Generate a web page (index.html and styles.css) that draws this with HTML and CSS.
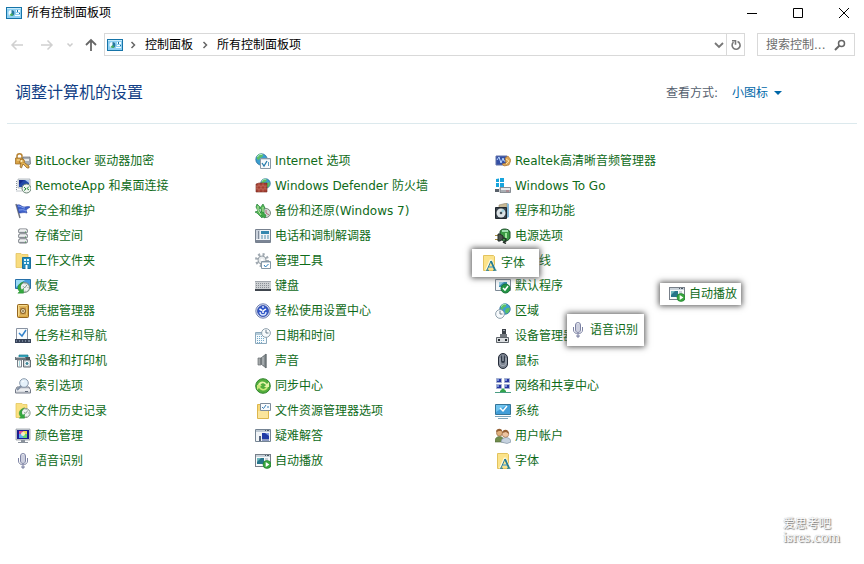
FILE: index.html
```html
<!DOCTYPE html>
<html lang="zh-CN">
<head>
<meta charset="utf-8">
<title>所有控制面板项</title>
<link rel="stylesheet" href="styles.css">
</head>
<body>
<svg class="sprite" aria-hidden="true">
  <symbol id="i-panel" viewBox="0 0 16 16"><rect x=".5" y="2.5" width="15" height="11" fill="#8fd0f3" stroke="#1674a8"/><path d="M1 3h14v1H1z" fill="#c8ecfb"/><circle cx="5.500" cy="8" r="3" fill="#f2fbff"/><path d="M5.500 8V5a3 3 0 0 1 0 6z" fill="#2577a0"/><path d="M5.500 8l-2 2a3 3 0 0 0 4 0z" fill="#48ad63"/><path d="M10 5h4v2h-4zM10 8h4v1h-4zM9 10h5v1H9z" fill="#f5fdff"/><path d="M11 5h1v2h-1zM13 8h1v1h-1z" fill="#20709d"/></symbol>
  <symbol id="i-chev" viewBox="0 0 8 8"><path d="M2.500 1l3 3-3 3" fill="none" stroke="#666" stroke-width="1.500"/></symbol>
  <symbol id="i-font" viewBox="0 0 16 16"><path d="M2.500.5h10l1 1v14h-11z" fill="#fbe38b" stroke="#e3c35e"/><path d="M5 15.500l4.500-10h1l4 10M7 12h6" fill="none" stroke="#fff8dc" stroke-width="2"/><path d="M6 15L10 6l4 9M7.500 12h5" fill="none" stroke="#267c91"/><path d="M10 6l4 9" stroke="#267c91" stroke-width="1.800"/><path d="M5 15.300h3M12 15.300h3.500" stroke="#267c91"/></symbol>
  <symbol id="i-mic" viewBox="0 0 16 16"><rect x="5.500" y=".5" width="5" height="10" rx="2.500" fill="#f4f5fa" stroke="#7c82a3"/><path d="M6 3h4M6 5h4M6 7h4M6 9h4" stroke="#a4a8c2"/><path d="M3.500 5v3c0 5 9 5 9 0V5M8 12v3M7 13v2h2v-2" fill="none" stroke="#7c82a3"/></symbol>
  <symbol id="i-play" viewBox="0 0 16 16"><rect x=".5" y="1.500" width="15" height="12" fill="#f8fafb" stroke="#777f89"/><path d="M1 2h14v2H1z" fill="#c9d2da"/><path d="M10 2.500h1M12 2.500h2" stroke="#4b5965"/><path d="M2 5h7v6H2z" fill="#27758a"/><path d="M2 5h4L2 9z" fill="#6cb7be"/><path d="M10 6h3M10 8h3" stroke="#9aa9b4"/><circle cx="12" cy="11.500" r="4" fill="#3aa63f" stroke="#18802a" stroke-width=".6"/><path d="M10.700 9v5l3.700-2.500z" fill="#fff"/></symbol>
  <symbol id="i-globe" viewBox="0 0 16 16"><circle cx="8" cy="8" r="7" fill="#3c9fd0" stroke="#286c9b"/><path d="M3 3c3-3 6-2 7-1L9 5 6 6 5 9 2 7zM10 7l4-1c1 5-2 8-5 8l-1-4z" fill="#5cc063"/><path d="M3 5c1-3 4-4 6-3" fill="none" stroke="#c9f2f5"/></symbol>
  <symbol id="i-clock" viewBox="0 0 16 16"><circle cx="8" cy="8" r="7" fill="#f7fafc" stroke="#899ba7" stroke-width="1.500"/><path d="M8 3v5h4" fill="none" stroke="#5f7482" stroke-width="1.500"/></symbol>
  <symbol id="i-restore" viewBox="0 0 16 16"><circle cx="9.500" cy="8" r="6" fill="#eef2f0" stroke="#7e9187" stroke-width="1.300"/><path d="M9.500 8.500l3-4M9.500 8.500l-2-2M10 3v1M14 8h-1M10 12v1" stroke="#697c71" fill="none"/><path d="M8 1C1 3-1 9 3 13l-2 2h7V9l-2 2C3 8 4 4 8 1z" fill="#35a83f" stroke="#168626" stroke-width=".5"/></symbol>
</svg>

<header>
  <div class="titlebar">
    <h1 class="caption"><svg class="icon" aria-hidden="true"><use href="#i-panel"/></svg>所有控制面板项</h1>
    <div class="window-buttons">
      <button type="button" aria-label="最小化"><svg viewBox="0 0 12 12"><path d="M1 6.500h10" stroke="#000"/></svg></button>
      <button type="button" aria-label="最大化"><svg viewBox="0 0 12 12"><path d="M1.500 1.500h9v9h-9z" fill="none" stroke="#000"/></svg></button>
      <button type="button" aria-label="关闭"><svg viewBox="0 0 12 12"><path d="M1 1l10 10M11 1L1 11" stroke="#000"/></svg></button>
    </div>
  </div>
  <div class="toolbar">
    <nav class="history">
      <button type="button" aria-label="后退" disabled><svg class="arrow" viewBox="0 0 14 14"><path d="M13 7H2M6.500 2.500L2 7l4.500 4.500" fill="none" stroke="#d0d0d0" stroke-width="1.500"/></svg></button>
      <button type="button" aria-label="前进" disabled><svg class="arrow" viewBox="0 0 14 14"><path d="M1 7h11M7.500 2.500L12 7l-4.500 4.500" fill="none" stroke="#d0d0d0" stroke-width="1.500"/></svg></button>
      <button type="button" class="recent" aria-label="最近位置"><svg class="chev" viewBox="0 0 8 8"><path d="M1.500 2.500L4 5l2.500-2.500" fill="none" stroke="#ccc" stroke-width="1.500"/></svg></button>
      <button type="button" class="up" aria-label="上移"><svg class="arrow" viewBox="0 0 14 14"><path d="M7 13V2M2 7l5-5 5 5" fill="none" stroke="#666" stroke-width="1.800"/></svg></button>
    </nav>
    <div class="address">
      <svg class="icon" aria-hidden="true"><use href="#i-panel"/></svg>
      <svg class="chev" aria-hidden="true"><use href="#i-chev"/></svg>
      <a href="#">控制面板</a>
      <svg class="chev" aria-hidden="true"><use href="#i-chev"/></svg>
      <a href="#">所有控制面板项</a>
      <button type="button" class="drop" aria-label="历史记录"><svg viewBox="0 0 10 10"><path d="M1 3l4 4 4-4" fill="none" stroke="#777" stroke-width="1.800"/></svg></button>
      <button type="button" class="refresh" aria-label="刷新"><svg viewBox="0 0 12 12"><path d="M7.500 2.500A4 4 0 1 1 3.500 3.200" fill="none" stroke="#777" stroke-width="1.600"/><path d="M2 1.800h3.500v4" fill="none" stroke="#777" stroke-width="1.600"/></svg></button>
    </div>
    <div class="search">
      <input type="text" aria-label="搜索控制面板" placeholder="搜索控制...">
      <svg viewBox="0 0 12 12" aria-hidden="true"><circle cx="7.500" cy="4.500" r="3" fill="none" stroke="#666" stroke-width="1.500"/><path d="M5.500 6.500L1 11" stroke="#666" stroke-width="2"/></svg>
    </div>
  </div>
</header>

<main>
  <div class="heading">
    <h2>调整计算机的设置</h2>
    <div class="view">
      <label for="view">查看方式:</label>
      <select id="view"><option>小图标</option></select>
      <svg viewBox="0 0 8 4" aria-hidden="true"><path d="M0 0h8L4 4z" fill="#0067a8"/></svg>
    </div>
  </div>

  <ul class="items">
    <li><a href="#"><svg class="icon" viewBox="0 0 16 16"><path d="M2 6V3c0-3 5-3 5 0v3" fill="none" stroke="#b78231" stroke-width="1.500"/><path d="M.5 5h7v6h-7z" fill="#d8a346" stroke="#96661f" stroke-width=".7"/><path d="M8 4h7l.5 7-4 2-4-3z" fill="#a9afb5" stroke="#676c72" stroke-width=".7"/><path d="M9 6h5v2H9z" fill="#e7eaec"/><circle cx="7" cy="8.500" r="2.500" fill="#d9a94d" stroke="#a87529"/><path d="M6 10l-1 4 1.500 1L8 11l4 4h2v-2l-4-3" fill="#e2b253" stroke="#8b5d20" stroke-width=".7"/><circle cx="6.500" cy="8" r="1" fill="#fff2c6"/><path d="M2 7h3" stroke="#fae1a1"/></svg>BitLocker 驱动器加密</a></li>
    <li><a href="#"><svg class="icon" viewBox="0 0 16 16"><path d="M1.500 3v10h6" fill="none" stroke="#85919b" stroke-dasharray="1"/><path d="M3 1h12v9H3z" fill="#e9edf0" stroke="#9ba5ad" stroke-width=".7"/><path d="M4 2h10v7H4z" fill="#2148a7"/><path d="M4 2h5L4 7z" fill="#142b8b"/><path d="M10 2h4v3z" fill="#a8c7f1"/><circle cx="11.500" cy="10.500" r="4.500" fill="#f0f5f0" stroke="#678173"/><path d="M9 9l2 2-2 1.500M14 8.500l-2 2 2 1.500" fill="none" stroke="#278a39"/></svg>RemoteApp 和桌面连接</a></li>
    <li><a href="#"><svg class="icon" viewBox="0 0 16 16"><path d="M1 1l4 14" stroke="#71757f" stroke-width="1.500"/><path d="M2 2c4-1 4 2 7 2 2 0 4-1 6 0l-4 3 1 3c-3-1-5 0-8 0z" fill="#3e61ca" stroke="#2942a1" stroke-width=".6"/><path d="M3 3c3 0 4 2 7 2M4 7c3 0 4-1 7 1" stroke="#84a2ee" fill="none"/></svg>安全和维护</a></li>
    <li><a href="#"><svg class="icon" viewBox="0 0 16 16"><g fill="#dcdfe1" stroke="#747980"><rect x="3.500" y="1" width="9" height="4" rx="1.500"/><rect x="3.500" y="6" width="9" height="4" rx="1.500"/><rect x="3.500" y="11" width="9" height="4" rx="1.500"/></g><path d="M5 2h6M5 7h6M5 12h6" stroke="#fff"/><path d="M5 4.500h6M5 9.500h6M5 14.500h6" stroke="#868b92"/><path d="M10 4h1M10 9h1M10 14h1" stroke="#429a4b"/></svg>存储空间</a></li>
    <li><a href="#"><svg class="icon" viewBox="0 0 16 16"><path d="M1 .5h5l1 1h6v13H1z" fill="#f8dc7f" stroke="#dfbd58" stroke-width=".7"/><path d="M7.500 4.500h8v11h-8z" fill="#238bbb" stroke="#1a709e"/><path d="M9 6h2v2H9zM12 6h2v2h-2zM9 9h2v2H9zM12 9h2v2h-2z" fill="#d9f5ff"/><path d="M10.500 12h2v4h-2z" fill="#fff"/></svg>工作文件夹</a></li>
    <li><a href="#"><svg class="icon" viewBox="0 0 16 16"><path d="M.5 1.500h15v9H.5z" fill="#459ddd" stroke="#2770a9"/><path d="M1 2h9L1 9z" fill="#9bdbf5"/><use href="#i-restore" x="2" y="3" width="13" height="13"/></svg>恢复</a></li>
    <li><a href="#"><svg class="icon" viewBox="0 0 16 16"><rect x="2.500" y="1.500" width="11" height="13" rx="1" fill="#dba945" stroke="#93651f"/><path d="M3.500 13V2.500H12" fill="none" stroke="#f7db8d"/><path d="M4.500 4h7v8h-7z" fill="#c8933b" stroke="#efd187" stroke-width=".7"/><circle cx="8" cy="8" r="2.500" fill="#efe1b5" stroke="#805923"/><circle cx="8" cy="8" r="1" fill="#8b7552"/></svg>凭据管理器</a></li>
    <li><a href="#"><svg class="icon" viewBox="0 0 16 16"><path d="M1.500.5h11v12h-11z" fill="#f9fbfd" stroke="#8993a2"/><path d="M4 5l3 3 4-6" fill="none" stroke="#3181cb" stroke-width="1.500"/><path d="M0 11h16v4H0z" fill="#374359"/><path d="M1 13h1M4 13h1M7 13h1M10 13h1M13 13h2" stroke="#a9bacf"/></svg>任务栏和导航</a></li>
    <li><a href="#"><svg class="icon" viewBox="0 0 16 16"><path d="M4 2h9v3H4z" fill="#35a7bd" stroke="#17758b" stroke-width=".7"/><path d="M0 4h11v3H0z" fill="#6d757c"/><path d="M1 4.500h9" stroke="#b5bdc3"/><path d="M2.500 7h4v7h-4z" fill="#f8fafa" stroke="#788189"/><path d="M4 8h1v5H4z" fill="#a9d8dd"/><path d="M8.500 7h7v7h-7z" fill="#cbd1d5" stroke="#656d73"/><circle cx="12" cy="10.500" r="2" fill="#3e8798" stroke="#fff"/><path d="M11 4h4v3h-4z" fill="#4c565c"/></svg>设备和打印机</a></li>
    <li><a href="#"><svg class="icon" viewBox="0 0 16 16"><path d="M2 9h12l1.500 3v3H.5v-3z" fill="#d8dbe0" stroke="#747b89"/><path d="M1 12h14" stroke="#fff"/><path d="M10 13.500h3" stroke="#5c6676"/><circle cx="9" cy="5" r="4.300" fill="#e5f1fa" stroke="#8898ab"/><path d="M6 8l-4 4" stroke="#8290a5" stroke-width="2"/><path d="M7 4l2-1" stroke="#fff"/></svg>索引选项</a></li>
    <li><a href="#"><svg class="icon" viewBox="0 0 16 16"><path d="M1 .5h6l1 1h4v13H1z" fill="#fae081" stroke="#dfc151" stroke-width=".7"/><use href="#i-restore" x="3" y="4" width="13" height="12"/></svg>文件历史记录</a></li>
    <li><a href="#"><svg class="icon" viewBox="0 0 16 16"><path d="M1 1h14v11H1z" fill="#d5d9df" stroke="#878f9a" stroke-width=".7"/><path d="M2 2h12v9H2z" fill="#1a1d91"/><path d="M4 3h4v3H4z" fill="#d84e99"/><path d="M8 3h4v3H8z" fill="#eed649"/><path d="M4 6h4v4H4z" fill="#5ba9f2"/><path d="M8 6h4v4H8z" fill="#65d56b"/><circle cx="8" cy="6" r="2" fill="#f5efc9"/><path d="M6 12h4v2h3v1H3v-1h3z" fill="#8a929c"/></svg>颜色管理</a></li>
    <li><a href="#"><svg class="icon"><use href="#i-mic"/></svg>语音识别</a></li>

    <li><a href="#"><svg class="icon" viewBox="0 0 16 16"><use href="#i-globe" width="13" height="13"/><path d="M5.500 5.500h10v10h-10z" fill="#f8fafc" stroke="#8b98a5"/><path d="M6 6h9v1H6z" fill="#d4dde5"/><path d="M7 10l2 3 3-5M13 10h1M13 12h1" fill="none" stroke="#267cac" stroke-width="1.300"/></svg>Internet 选项</a></li>
    <li><a href="#"><svg class="icon" viewBox="0 0 16 16"><use href="#i-globe" x="5" width="11" height="11"/><path d="M1 6l3-1h8v9H1z" fill="#a53f32" stroke="#77291f" stroke-width=".6"/><path d="M1 8h11M1 11h11M4 5v3M8 5v3M2 8v3M6 8v3M10 8v3M4 11v3M8 11v3" stroke="#db9a83" stroke-width=".4"/></svg>Windows Defender 防火墙</a></li>
    <li><a href="#"><svg class="icon" viewBox="0 0 16 16"><circle cx="11" cy="10" r="4.500" fill="#d5dad7" stroke="#788a7c"/><path d="M11 7v3l3 2" fill="none" stroke="#b36372"/><path d="M2 1l3 3-1 3 2 3V6L5 5l3-4 2 4H9v6l-2 4-5-5-2-1 3-1-2-4z" fill="#58b957" stroke="#238039" stroke-width=".7"/><path d="M7 8c1 2 2 3 4 4l-1 3c-3-1-5-3-5-5z" fill="#41a946" stroke="#238039" stroke-width=".6"/><path d="M3 3v4l3 5M8 4v5" fill="none" stroke="#bce9a9"/></svg>备份和还原(Windows 7)</a></li>
    <li><a href="#"><svg class="icon" viewBox="0 0 16 16"><path d="M.5 1.500h15v13H.5z" fill="#f1f3f6" stroke="#77818f"/><path d="M1 2h4v9H1z" fill="#cbd2dc"/><path d="M3.500 3v8" stroke="#7f8a99"/><path d="M6 3h8v3H6z" fill="#3587ae"/><path d="M6 8h2M9 8h2M12 8h2M6 10h2M9 10h2M12 10h2" stroke="#528fac"/><path d="M1 13h14" stroke="#536175" stroke-width="1.500"/></svg>电话和调制解调器</a></li>
    <li><a href="#"><svg class="icon" viewBox="0 0 16 16"><circle cx="7" cy="7" r="5.500" fill="none" stroke="#a1aab2" stroke-width="3" stroke-dasharray="2 2.300"/><circle cx="7" cy="7" r="4" fill="#e8ebed" stroke="#9aa3aa"/><circle cx="7" cy="7" r="1.500" fill="#fff"/><path d="M6.500 8.500h9v7h-9z" fill="#fff" stroke="#8597a6"/><path d="M7 9.500h8" stroke="#c9d3dc"/><path d="M9 12l1.500 2 3-3" fill="none" stroke="#257bbb"/></svg>管理工具</a></li>
    <li><a href="#"><svg class="icon" viewBox="0 0 16 16"><path d="M0 3h16v9H0z" fill="#cdd0d3"/><path d="M0 11h16v2H0z" fill="#40464e"/><path d="M1 5.500h14M1 7.500h14M1 9.500h14" stroke="#8b9096" stroke-dasharray="1 1"/><path d="M0 3.500h16" stroke="#8e949b" stroke-width=".7"/></svg>键盘</a></li>
    <li><a href="#"><svg class="icon" viewBox="0 0 16 16"><circle cx="8" cy="8" r="7.200" fill="#d9e4fa" stroke="#7381b0"/><circle cx="8" cy="8" r="5.500" fill="#3359c8" stroke="#243b98" stroke-width=".7"/><path d="M8 10V8l3-2M4.500 6L7 7.500" fill="none" stroke="#fff" stroke-width="1.500"/><path d="M5 9c0 4 6 4 6 0M7 4h2" fill="none" stroke="#dce8ff" stroke-width="1.300"/></svg>轻松使用设置中心</a></li>
    <li><a href="#"><svg class="icon" viewBox="0 0 16 16"><path d="M.5 4.500h11v11H.5z" fill="#f5fafd" stroke="#8ca9bc"/><path d="M1 5h10v2H1z" fill="#b4cbd9"/><path d="M2 8.500h8M2 10.500h8M2 12.500h8M2 14.500h6" stroke="#75a9c8" stroke-dasharray="1 1"/><use href="#i-clock" x="6" width="10" height="10"/></svg>日期和时间</a></li>
    <li><a href="#"><svg class="icon" viewBox="0 0 16 16"><path d="M3 5h3v7H3z" fill="#a4a8aa" stroke="#676d70" stroke-width=".7"/><path d="M6 5l5-4v14l-5-4z" fill="#858c90" stroke="#585f63" stroke-width=".7"/><path d="M8 4v8" stroke="#c3c7c9"/><path d="M11 1v14" stroke="#676e72"/></svg>声音</a></li>
    <li><a href="#"><svg class="icon" viewBox="0 0 16 16"><circle cx="8" cy="8" r="7.300" fill="#54ae3d" stroke="#31852d"/><path d="M3 7c1-4 6-5 9-1l2-2v5H9l2-2C8 4 6 5 5 8z" fill="#e4f3a6"/><path d="M13 9c-1 4-6 5-9 1l-2 2V7h5L5 9c3 3 5 2 6 0z" fill="#c9e879"/></svg>同步中心</a></li>
    <li><a href="#"><svg class="icon" viewBox="0 0 16 16"><path d="M2.500 1.500h4l1 1h6v13h-11z" fill="#f7d878" stroke="#dcb64d"/><path d="M5.500.5h10v7h-10z" fill="#f9fbfd" stroke="#7f8c9b"/><path d="M7 4l1.500 1.500L11 2M12 4h2" fill="none" stroke="#387eb6"/><path d="M3 8h10v7H3z" fill="#fbe59c"/></svg>文件资源管理器选项</a></li>
    <li><a href="#"><svg class="icon" viewBox="0 0 16 16"><path d="M.5 1.500h15v12H.5z" fill="#f1f4f7" stroke="#758493"/><path d="M1 2h14v2H1z" fill="#bec9d3"/><path d="M10 2.500h1M12 2.500h2" stroke="#53606d"/><path d="M7 5h7v6H7z" fill="#203ba6"/><path d="M10 5h4v3z" fill="#849ee5"/><path d="M7 11h7v2H7z" fill="#8d9bc2"/><path d="M4 8h2v5H4z" fill="#56657d"/></svg>疑难解答</a></li>
    <li><a href="#"><svg class="icon"><use href="#i-play"/></svg>自动播放</a></li>

    <li><a href="#"><svg class="icon" viewBox="0 0 16 16"><path d="M1 3h11v9H1z" fill="#3450a5" stroke="#6071a7"/><path d="M2 7l2-3 2 6 2-5 1 3h3" fill="none" stroke="#b6d5ff"/><path d="M10 5l3-2 3 4-2 5-5 1-2-2 4-1z" fill="#dda755" stroke="#a66d2c" stroke-width=".6"/><path d="M11 6l3 2-3 3" fill="none" stroke="#ffe3a1"/></svg>Realtek高清晰音频管理器</a></li>
    <li><a href="#"><svg class="icon" viewBox="0 0 16 16"><path d="M1 1l3-.5v3.500H1zM5 0l4-.5V4H5zM1 5h3v4H1zM5 5h4v4H5z" fill="#17a4dc"/><path d="M5 9.500h10.500v5H5z" fill="#a9aeb4" stroke="#676e76" stroke-width=".7"/><path d="M6 10h9v2H6z" fill="#e6e9eb"/><path d="M0 11h4v3H0z" fill="#59616a"/><path d="M11 13h3" stroke="#ae6972"/></svg>Windows To Go</a></li>
    <li><a href="#"><svg class="icon" viewBox="0 0 16 16"><path d="M4 2l8-2v13l-8 2z" fill="#c9b995" stroke="#8e836d" stroke-width=".6"/><path d="M12 0l2 1v13l-2 1z" fill="#84b7d9"/><path d="M.5 4.500h11v11H.5z" fill="#39424a" stroke="#20272e"/><circle cx="6" cy="10" r="4.500" fill="#dde3e6"/><path d="M6 10l1-4 3 2z" fill="#a2d2df"/><circle cx="6" cy="10" r="1.300" fill="#42525a"/></svg>程序和功能</a></li>
    <li><a href="#"><svg class="icon" viewBox="0 0 16 16"><path d="M5 4c0-4 9-4 10 0v6c-2 4-8 4-10 0z" fill="#3d9b46" stroke="#1c4f2a"/><path d="M7 2h6v2H7z" fill="#a0ddb0"/><path d="M11 5v5" stroke="#9ee89d" stroke-width="2"/><path d="M0 7.500h4M0 11.500h4" stroke="#a78d3e"/><path d="M3 6h2l3 2v3l-3 2H3z" fill="#4a524d" stroke="#252c27"/><path d="M8 10c4 0 4 4 0 4l3 1.500" fill="none" stroke="#26342a" stroke-width="1.500"/></svg>电源选项</a></li>
    <li><a href="#"><svg class="icon" viewBox="0 0 16 16"><path d="M3 5h6v7H3z" fill="#a82939"/><path d="M10 5c2 2 2 5 0 7M12 3c4 3 4 8 0 11" fill="none" stroke="#cf6574"/></svg>红外线</a></li>
    <li><a href="#"><svg class="icon" viewBox="0 0 16 16"><path d="M.5 1.500h15v11H.5z" fill="#f4f7fa" stroke="#7c8995"/><path d="M4 4h8v5H4z" fill="#398bb1"/><path d="M4 4h5L4 8z" fill="#93cadf"/><circle cx="10.500" cy="10.500" r="4.500" fill="#249544" stroke="#167236"/><path d="M8 10l2 2 3-4" fill="none" stroke="#fff" stroke-width="1.500"/></svg>默认程序</a></li>
    <li><a href="#"><svg class="icon" viewBox="0 0 16 16"><use href="#i-globe" x="4" width="12" height="12"/><use href="#i-clock" x="0" y="6" width="10" height="10"/></svg>区域</a></li>
    <li><a href="#"><svg class="icon" viewBox="0 0 16 16"><path d="M7 1h4v6H7z" fill="#3b4148"/><path d="M8 2h2v1H8z" fill="#a0a8af"/><path d="M5 6h7v4H5z" fill="#73787e"/><path d="M1.500 9.500h12v5h-12z" fill="#d9dcdf" stroke="#5e646a"/><path d="M3 11h2v2H3zM10 11h2v2h-2z" fill="#252a2f"/></svg>设备管理器</a></li>
    <li><a href="#"><svg class="icon" viewBox="0 0 16 16"><rect x="3.500" y=".5" width="9" height="15" rx="4.500" fill="#7d8491" stroke="#242b38"/><rect x="6" y="2" width="4" height="8" rx="2" fill="#303947"/><path d="M8 2v6" stroke="#c3ccd8"/><path d="M5 5v6c1 2 5 2 6 0V5" fill="none" stroke="#a8afba"/></svg>鼠标</a></li>
    <li><a href="#"><svg class="icon" viewBox="0 0 16 16"><g fill="#2735a0" stroke="#a3afcf"><path d="M1.500.5h5v4h-5zM9.500.5h5v4h-5zM1.500 6.500h5v4h-5zM9.500 6.500h5v4h-5z"/></g><path d="M2 1h2v2H2zM10 1h2v2h-2zM2 7h2v2H2zM10 7h2v2h-2z" fill="#7891d8"/><path d="M8 10l3 3v2H5v-2z" fill="#32a44c"/><path d="M0 14.500h16" stroke="#4b9d84"/></svg>网络和共享中心</a></li>
    <li><a href="#"><svg class="icon" viewBox="0 0 16 16"><path d="M.5 1.500h15v10H.5z" fill="#429ed9" stroke="#357598"/><path d="M1 2h11L1 9z" fill="#70c4ef"/><path d="M5 5l3 3 4-5" fill="none" stroke="#fff" stroke-width="1.500"/><path d="M0 13.500h16M3 15.500h10" stroke="#7ba5bc"/></svg>系统</a></li>
    <li><a href="#"><svg class="icon" viewBox="0 0 16 16"><path d="M0 13c0-6 9-6 9 0v1H0z" fill="#708c4c" stroke="#4d6935" stroke-width=".6"/><path d="M6 14c0-6 10-6 10 0l-4 1.500z" fill="#c6d2df" stroke="#74869a" stroke-width=".6"/><circle cx="4.500" cy="5" r="3" fill="#e0b07c" stroke="#8b623c" stroke-width=".6"/><circle cx="10.500" cy="6" r="3.300" fill="#edc4a0" stroke="#986c4a" stroke-width=".6"/><path d="M1 4c0-4 6-4 6-1L4 3zM7 5c1-5 7-4 7 1l-3-2z" fill="#956034"/></svg>用户帐户</a></li>
    <li><a href="#"><svg class="icon"><use href="#i-font"/></svg>字体</a></li>
  </ul>
</main>

<a href="#" class="float float-font"><svg class="icon"><use href="#i-font"/></svg>字体</a>
<a href="#" class="float float-speech"><svg class="icon"><use href="#i-mic"/></svg>语音识别</a>
<a href="#" class="float float-play"><svg class="icon"><use href="#i-play"/></svg>自动播放</a>

<div class="watermark"><span>爱思考吧</span><span class="site">isres.com</span></div>
</body>
</html>
```
FILE: styles.css
```css
* { box-sizing: border-box; }

body {
  margin: 0;
  min-height: 100vh;
  position: relative;
  background: #fff;
  color: #000;
  font: 12px/16px "DejaVu Sans", "Noto Sans CJK SC", sans-serif;
}

a { color: inherit; text-decoration: none; }
h1, h2 { margin: 0; font-weight: normal; }

button {
  display: flex;
  align-items: center;
  justify-content: center;
  padding: 0;
  border: 0;
  background: none;
}

.sprite { position: absolute; width: 0; height: 0; }
.icon { flex: none; width: 16px; height: 16px; }
.chev { flex: none; width: 8px; height: 8px; }

.titlebar {
  display: flex;
  justify-content: space-between;
  height: 25px;
  padding-left: 6px;
}

.caption { display: flex; align-items: center; gap: 5px; font-size: 12px; }
.window-buttons { display: flex; gap: 6px; }
.window-buttons button { width: 40px; }
.window-buttons svg { width: 12px; height: 12px; }

.toolbar {
  display: flex;
  height: 23px;
  margin: 8px 9px 0 10px;
}

.history { display: flex; align-items: center; width: 94px; }
.history button { width: 14px; }
.history button + button { margin-left: 16px; }
.history button.recent { width: 8px; margin-left: 12px; }
.history button.up { margin-left: 10px; }
.arrow { width: 14px; height: 14px; }

.address {
  display: flex;
  align-items: center;
  flex: 1;
  border: 1px solid #d9d9d9;
  padding-left: 2px;
}

.address .chev { margin: 0 8px 0 6px; }
.address a + .chev { margin-left: 8px; }
.address .drop { width: 14px; margin-left: auto; }
.address .drop svg { width: 10px; height: 10px; }
.address .refresh { width: 18px; align-self: stretch; border-left: 1px solid #d9d9d9; }
.address .refresh svg { width: 12px; height: 12px; }

.search {
  display: flex;
  align-items: center;
  width: 98px;
  margin-left: 12px;
  padding: 0 8px;
  border: 1px solid #d9d9d9;
}

.search input {
  flex: 1;
  min-width: 0;
  padding: 0;
  border: 0;
  outline: 0;
  font: inherit;
}

.search input::placeholder { color: #6d6d6d; opacity: 1; }
.search svg { width: 12px; height: 12px; }

.heading {
  display: flex;
  justify-content: space-between;
  align-items: center;
  height: 68px;
  margin: 0 7px;
  padding: 7px 75px 0 8px;
  border-bottom: 1px solid #dce9ed;
}

.heading h2 { color: #123f86; font-size: 16px; line-height: 24px; }

.view { display: flex; align-items: center; color: #55606e; }

.view select {
  appearance: none;
  margin-left: 14px;
  padding: 0;
  border: 0;
  background: none;
  color: #0067a8;
  font: inherit;
}

.view svg { width: 8px; height: 4px; margin-left: 5px; }

.items {
  display: grid;
  grid-template-rows: repeat(13, 25px);
  grid-auto-columns: 240px;
  grid-auto-flow: column;
  margin: 24px 0 0;
  padding: 0 0 0 15px;
  list-style: none;
  color: #0f6b19;
}

.items a {
  display: inline-flex;
  align-items: center;
  gap: 4px;
  height: 25px;
  white-space: nowrap;
}

.float {
  position: absolute;
  display: flex;
  align-items: center;
  gap: 4px;
  background: #fff;
  color: #0f6b19;
  white-space: nowrap;
  box-shadow: 0 0 6px 1px #555;
}

.float-font { left: 472px; top: 249px; padding: 6px 14px 6px 9px; }
.float-speech { left: 567px; top: 314px; padding: 8px 6px 8px 3px; }
.float-play { left: 660px; top: 283px; padding: 3px 4px 3px 9px; }

.watermark {
  position: absolute;
  right: 24px;
  bottom: 19px;
  display: flex;
  flex-direction: column;
  color: #fff;
  font: 12px/15px "Noto Sans CJK SC", sans-serif;
  text-shadow: 1px 1px 1px #777, 0 0 1px #999;
}

.site { font: 15px/15px "Liberation Serif", serif; }
```
